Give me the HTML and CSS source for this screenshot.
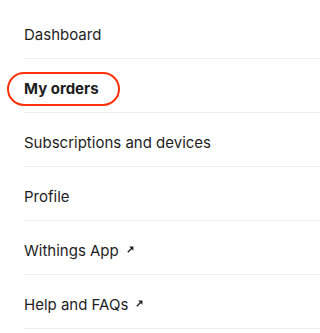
FILE: index.html
```html
<!DOCTYPE html>
<html lang="en">
<head>
<meta charset="utf-8">
<title>Account menu</title>
<link rel="stylesheet" href="styles.css">
</head>
<body>
<nav class="menu">
  <ul class="menu-list">
    <li class="menu-item"><a class="menu-link" href="#"><span class="label">Dashboard</span></a></li>
    <li class="menu-item"><a class="menu-link is-active" href="#"><span class="label highlighted">My orders</span></a></li>
    <li class="menu-item"><a class="menu-link" href="#"><span class="label">Subscriptions and devices</span></a></li>
    <li class="menu-item"><a class="menu-link" href="#"><span class="label">Profile</span></a></li>
    <li class="menu-item"><a class="menu-link" href="#"><span class="label">Withings App</span><svg class="ext" width="7" height="7" viewBox="0 0 7 7" aria-hidden="true"><path d="M0.8 6.2 L5 2" stroke="#1e1e1e" stroke-width="1.3" fill="none"/><path d="M2.2 0.6 H6.4 V4.8 Z" fill="#1e1e1e"/></svg></a></li>
    <li class="menu-item"><a class="menu-link" href="#"><span class="label">Help and FAQs</span><svg class="ext" width="7" height="7" viewBox="0 0 7 7" aria-hidden="true"><path d="M0.8 6.2 L5 2" stroke="#1e1e1e" stroke-width="1.3" fill="none"/><path d="M2.2 0.6 H6.4 V4.8 Z" fill="#1e1e1e"/></svg></a></li>
  </ul>
</nav>
</body>
</html>
```

FILE: styles.css
```css
html, body {
  margin: 0;
  padding: 0;
  background: #ffffff;
}

body {
  font-family: Inter, "Liberation Sans", Arial, sans-serif;
  color: #1e1e1e;
}

.menu {
  padding-top: 5px;
}

.menu-list {
  list-style: none;
  margin: 0;
  padding: 0 0 0 24px;
}

.menu-item {
  border-bottom: 1px solid #efefef;
}

.menu-link {
  display: flex;
  align-items: flex-start;
  padding: 20px 0 13px;
  font-size: 15px;
  line-height: 20px;
  color: #1e1e1e;
  text-decoration: none;
}

.label {
  position: relative;
}

.is-active .label {
  font-weight: bold;
}

.highlighted::after {
  content: "";
  position: absolute;
  top: -7px;
  bottom: -7px;
  left: -17px;
  right: -21px;
  border: 2px solid #ff3008;
  border-radius: 18px;
}

.ext {
  display: block;
  margin: 5px 0 0 8px;
  flex: none;
}
```
